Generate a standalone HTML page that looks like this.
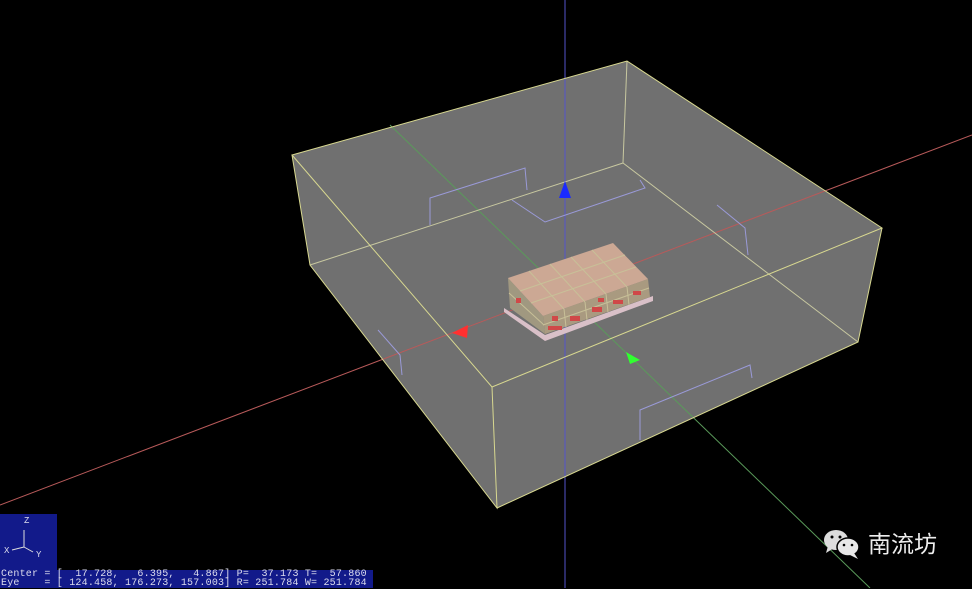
<!DOCTYPE html><html><head><style>html,body{margin:0;padding:0;background:#000;width:972px;height:588px;overflow:hidden}
.t{position:absolute;font-family:"Liberation Mono",monospace;color:#dde;font-size:10.5px;line-height:9px;white-space:pre}
</style></head><body>
<svg width="972" height="588" style="position:absolute;left:0;top:0">
<polygon points="292,155 627,61 882,228 858,342 497,508 310,265" fill="#707070"/>
<line x1="565" y1="0" x2="565" y2="588" stroke="#5555cc" stroke-width="1"/>
<line x1="0" y1="505" x2="972" y2="135" stroke="#b85a5a" stroke-width="1"/>
<line x1="390" y1="125" x2="870" y2="588" stroke="#5a9a5a" stroke-width="1"/>
<g stroke="#9a9ad8" fill="none" stroke-width="1">
<polyline points="430,225 430,198 525,168 527,190"/>
<polyline points="512,200 545,222 645,188 640,180"/>
<polyline points="717,205 745,228 748,255"/>
<polyline points="640,440 640,410 750,365 752,378"/>
<polyline points="378,330 400,355 402,375"/>
</g>
<g stroke="#d8d890" fill="none" stroke-width="1">
<line x1="310" y1="265" x2="623" y2="163" stroke="#c8c8a0"/>
<line x1="627" y1="61" x2="623" y2="163" stroke="#c8c8a0"/>
<line x1="623" y1="163" x2="858" y2="342" stroke="#c8c8a0"/>
<polygon points="292,155 627,61 882,228 492,387"/>
<polyline points="292,155 310,265 497,508 492,387"/>
<polyline points="497,508 858,342 882,228"/>
</g>
<!-- building -->
<polygon points="504,308 545,335 653,296 653,301 545,341 504,312" fill="#d9c0c8"/>
<polygon points="543,316 648,279 650,297 545,334" fill="#a99a80"/>
<polygon points="508,278 543,316 545,334 510,308" fill="#a09880"/>
<polygon points="508,278 613,243 648,279 543,316" fill="#cca894"/>
<g stroke="#c8c098" stroke-width="1" fill="none">
<line x1="529" y1="271" x2="564" y2="309"/><line x1="550" y1="264" x2="585" y2="302"/><line x1="571" y1="257" x2="606" y2="294"/><line x1="592" y1="250" x2="627" y2="287"/>
<line x1="520" y1="291" x2="625" y2="255"/><line x1="531" y1="303" x2="636" y2="267"/>
<line x1="543" y1="325" x2="649" y2="288"/><line x1="509" y1="293" x2="544" y2="325"/>
<line x1="564" y1="309" x2="566" y2="327"/><line x1="585" y1="302" x2="587" y2="320"/><line x1="606" y1="294" x2="608" y2="312"/><line x1="627" y1="287" x2="629" y2="305"/>
</g>
<g fill="#d04848"><rect x="548" y="326" width="14" height="4"/><rect x="570" y="316" width="10" height="5"/><rect x="592" y="307" width="10" height="5"/><rect x="613" y="300" width="10" height="4"/><rect x="633" y="291" width="8" height="4"/><rect x="552" y="316" width="6" height="5"/><rect x="598" y="298" width="6" height="4"/><rect x="516" y="298" width="5" height="5"/></g>
<polygon points="565,181 559,198 571,198" fill="#1a2aff"/>
<polygon points="452,333 468,325 467,338" fill="#ff3030"/>
<polygon points="626,352 640,360 630,364" fill="#30ff30"/>
<rect x="0" y="514" width="57" height="56" fill="#121a8a"/>
<rect x="0" y="570" width="373" height="18" fill="#121a8a"/>
<g stroke="#ddd" fill="none"><line x1="24" y1="530" x2="24" y2="547"/><line x1="24" y1="547" x2="12" y2="550"/><line x1="24" y1="547" x2="33" y2="552"/></g>
</svg>
<div class="t" style="left:24px;top:517px;font-size:9px">Z</div>
<div class="t" style="left:4px;top:547px;font-size:9px">X</div>
<div class="t" style="left:36px;top:551px;font-size:9px">Y</div>
<div class="t" style="left:1px;top:570px;font-size:10px;letter-spacing:0.2px">Center = [  17.728,   6.395,   4.867] P=  37.173 T=  57.860
Eye    = [ 124.458, 176.273, 157.003] R= 251.784 W= 251.784</div>
<svg width="40" height="36" style="position:absolute;left:822px;top:526px">
<ellipse cx="14" cy="14" rx="12" ry="10" fill="#ddd"/><polygon points="6,20 4,27 12,22" fill="#ddd"/>
<ellipse cx="26" cy="21" rx="11" ry="9" fill="#e8e8e8" stroke="#000" stroke-width="1.5"/><polygon points="32,27 36,33 28,29" fill="#e8e8e8"/>
<circle cx="10" cy="11" r="1.5" fill="#000"/><circle cx="18" cy="11" r="1.5" fill="#000"/><circle cx="22" cy="19" r="1.3" fill="#000"/><circle cx="30" cy="19" r="1.3" fill="#000"/>
</svg>
<div style="position:absolute;left:868px;top:530px;font-family:'Liberation Sans','Noto Sans CJK SC',sans-serif;font-size:23px;color:#eee;line-height:28px">南流坊</div>
</body></html>
